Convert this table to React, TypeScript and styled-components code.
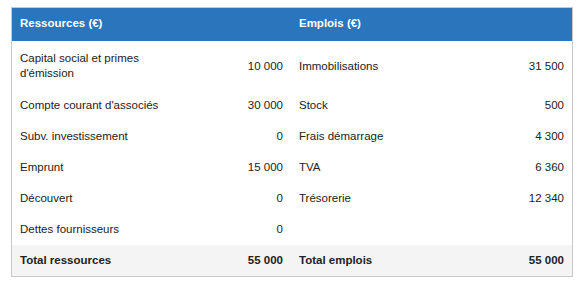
import React from "react";
import styled, { createGlobalStyle } from "styled-components";

const Global = createGlobalStyle`
  html, body { margin: 0; padding: 0; background: #ffffff; }
  body { font-family: "Liberation Sans", Arial, Helvetica, sans-serif; }
`;

const Page = styled.div`
  padding: 7px 9px 0 11px;
`;

const Table = styled.table`
  width: 562px;
  border-collapse: collapse;
  table-layout: fixed;
  border: 1px solid #c9c9c9;
  font-size: 11.5px;
  color: #222;
`;

const HeadCell = styled.th`
  background: #2a75bc;
  color: #ffffff;
  font-weight: bold;
  text-align: left;
  line-height: 15px;
  padding: 8px 8px 10px;
`;

const Row = styled.tr<{ $total?: boolean }>`
  background: ${(p) => (p.$total ? "#f4f4f4" : "#ffffff")};
  font-weight: ${(p) => (p.$total ? "bold" : "normal")};
`;

const Cell = styled.td<{ $num?: boolean; $tall?: boolean }>`
  text-align: ${(p) => (p.$num ? "right" : "left")};
  vertical-align: middle;
  line-height: 15px;
  padding: ${(p) => (p.$tall ? "10px 8px 9px" : "8px 8px")};
  white-space: ${(p) => (p.$num ? "nowrap" : "normal")};
`;

type Line = { label: string; value: string };

const ressources: Line[] = [
  { label: "Capital social et primes d'émission", value: "10 000" },
  { label: "Compte courant d'associés", value: "30 000" },
  { label: "Subv. investissement", value: "0" },
  { label: "Emprunt", value: "15 000" },
  { label: "Découvert", value: "0" },
  { label: "Dettes fournisseurs", value: "0" },
];

const emplois: Line[] = [
  { label: "Immobilisations", value: "31 500" },
  { label: "Stock", value: "500" },
  { label: "Frais démarrage", value: "4 300" },
  { label: "TVA", value: "6 360" },
  { label: "Trésorerie", value: "12 340" },
];

export default function App() {
  return (
    <Page>
      <Global />
      <Table>
        <colgroup>
          <col style={{ width: "167px" }} />
          <col style={{ width: "112px" }} />
          <col style={{ width: "168px" }} />
          <col style={{ width: "113px" }} />
        </colgroup>
        <thead>
          <tr>
            <HeadCell colSpan={2}>Ressources (€)</HeadCell>
            <HeadCell colSpan={2}>Emplois (€)</HeadCell>
          </tr>
        </thead>
        <tbody>
          {ressources.map((r, i) => {
            const e = emplois[i];
            const tall = i === 0;
            return (
              <Row key={r.label}>
                <Cell $tall={tall}>{r.label}</Cell>
                <Cell $num $tall={tall}>{r.value}</Cell>
                <Cell $tall={tall}>{e ? e.label : ""}</Cell>
                <Cell $num $tall={tall}>{e ? e.value : ""}</Cell>
              </Row>
            );
          })}
          <Row $total>
            <Cell>Total ressources</Cell>
            <Cell $num>55 000</Cell>
            <Cell>Total emplois</Cell>
            <Cell $num>55 000</Cell>
          </Row>
        </tbody>
      </Table>
    </Page>
  );
}
